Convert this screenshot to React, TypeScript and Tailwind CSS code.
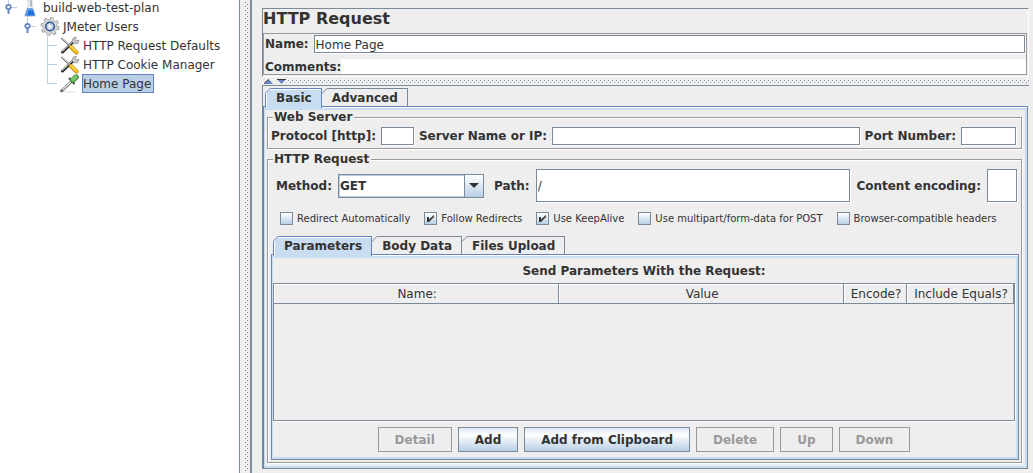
import React, { useState } from 'react';

type IconName = 'plan' | 'users' | 'config' | 'sampler';

interface TreeItem {
  id: string;
  label: string;
  level: number;
  icon: IconName;
}

const treeItems: TreeItem[] = [
  { id: 'plan', label: 'build-web-test-plan', level: 0, icon: 'plan' },
  { id: 'users', label: 'JMeter Users', level: 1, icon: 'users' },
  { id: 'defaults', label: 'HTTP Request Defaults', level: 2, icon: 'config' },
  { id: 'cookies', label: 'HTTP Cookie Manager', level: 2, icon: 'config' },
  { id: 'home', label: 'Home Page', level: 2, icon: 'sampler' }
];

const initialOptions = [
  { id: 'redirect', label: 'Redirect Automatically', checked: false },
  { id: 'follow', label: 'Follow Redirects', checked: true },
  { id: 'keepalive', label: 'Use KeepAlive', checked: true },
  { id: 'multipart', label: 'Use multipart/form-data for POST', checked: false },
  { id: 'browser', label: 'Browser-compatible headers', checked: false }
];

const actions = [
  { label: 'Detail', disabled: true },
  { label: 'Add', disabled: false },
  { label: 'Add from Clipboard', disabled: false },
  { label: 'Delete', disabled: true },
  { label: 'Up', disabled: true },
  { label: 'Down', disabled: true }
];

const inputClass =
  'min-w-0 border border-[#7a8a99] bg-white px-px font-normal shadow-[1px_1px_0_#fff] outline-none';

const groupClass =
  'min-w-0 border border-[#999] shadow-[1px_1px_0_#fff,inset_1px_1px_0_#fff]';

const panelClass =
  'flex flex-1 flex-col border border-[#7a8a99] border-l-[#6382bf] border-t-[#6382bf] shadow-[inset_0_1px_0_#fff,inset_1px_3px_0_#c8ddf2,inset_-2px_-2px_0_#c8ddf2]';

const bumpsClass =
  'bg-[conic-gradient(at_1px_1px,transparent_75%,#7a8a99_0),conic-gradient(at_1px_1px,transparent_75%,#7a8a99_0),conic-gradient(at_1px_1px,transparent_75%,#fff_0),conic-gradient(at_1px_1px,transparent_75%,#fff_0)] [background-size:4px_4px] [background-position:1px_1px,3px_3px,0_0,2px_2px]';

const TreeIcon: React.FC<{ name: IconName }> = ({ name }) => {
  switch (name) {
    case 'plan':
      return (
        <svg width="19" height="19" viewBox="0 0 19 19" className="shrink-0">
          <ellipse cx="9" cy="17.7" rx="6.500" ry="1.200" fill="#d5d5d5" />
          <path d="M7 2h4v5.500l2.800 9q.4 1.500-1 1.500H5.200q-1.400 0-1-1.500L7 7.500z" fill="#edf1f5" stroke="#c4ccd4" strokeWidth=".7" />
          <path d="M6.300 10.500h5.400l2.100 6q.2 1.300-.8 1.300H5q-1 0-.8-1.300z" fill="#2373d4" />
          <path d="M6.300 10.500h5.400l.7 2H5.600z" fill="#5d9fe6" />
          <path d="M6.500 13l-1 3.500" stroke="#a8d0fa" />
          <path d="M10 2.500v6" stroke="#7d8994" />
        </svg>
      );
    case 'users':
      return (
        <svg width="20" height="19" viewBox="0 0 20 19" className="shrink-0">
          <circle cx="10" cy="9.500" r="8" fill="none" stroke="#8c8c8c" strokeWidth="2.800" strokeDasharray="3.200 3.080" />
          <circle cx="10" cy="9.500" r="7.200" fill="#dadada" stroke="#999" strokeWidth=".8" />
          <circle cx="10" cy="9.500" r="7.700" fill="none" stroke="#dcdcdc" strokeWidth="2" strokeDasharray="2.200 3.850" strokeDashoffset="-.5" />
          <circle cx="10" cy="9.500" r="4.300" fill="#b9d2ed" stroke="#36578c" strokeWidth="1.600" />
          <path d="M8.500 7l4 2.500-4 2.500z" fill="#fff" />
        </svg>
      );
    case 'config':
      return (
        <svg width="20" height="19" viewBox="0 0 20 19" className="shrink-0">
          <path d="M2.500 16L13 6" stroke="#222" strokeWidth="3" strokeLinecap="round" />
          <path d="M2.500 15L13 5" stroke="#bbb" strokeWidth="1.500" strokeLinecap="round" />
          <path d="M16.500 1l-3.500 1.200-1 3.300 2.500 2.500 3.500-.8 1-3.200-3 1-1-1z" fill="#ccc" stroke="#888" strokeWidth=".7" />
          <path d="M1.500 2L10 10" stroke="#555" strokeWidth="1.700" />
          <path d="M1.500 1.500L10 9.500" stroke="#e5e5e5" />
          <path d="M11 11l5.500 5.500" stroke="#b57d0c" strokeWidth="4" strokeLinecap="round" />
          <path d="M11 10.800l5.500 5.500" stroke="#f9c21c" strokeWidth="3" strokeLinecap="round" />
          <path d="M11.500 10.500l4.500 4.500" stroke="#ffe884" strokeWidth=".9" />
        </svg>
      );
    default:
      return (
        <svg width="20" height="19" viewBox="0 0 20 19" className="shrink-0">
          <path d="M2 18h14" stroke="#e2e2e2" />
          <path d="M1.500 17L11.500 7.500" stroke="#666" strokeWidth="2.600" strokeLinecap="round" />
          <path d="M2.500 15.800L12 6.700" stroke="#eee" strokeWidth="1.300" />
          <path d="M9.500 4.500l4.500 5" stroke="#455045" strokeWidth="2" strokeLinecap="round" />
          <path d="M12.800 6L16 3.200" stroke="#3f8a40" strokeWidth="5.600" strokeLinecap="round" />
          <path d="M12.800 5.500L15.800 3" stroke="#79c86e" strokeWidth="3.600" strokeLinecap="round" />
        </svg>
      );
  }
};

const Handle: React.FC = () => (
  <svg width="14" height="19" viewBox="0 0 14 19" className="shrink-0">
    <path d="M6 9.500h6" stroke="#b8cfe5" />
    <path d="M3.500 0v6" stroke="#b8cfe5" />
    <path d="M3.500 11v5" stroke="#6382bf" strokeWidth="2" />
    <circle cx="3.500" cy="9" r="2.200" fill="#fff" stroke="#6382bf" strokeWidth="1.700" />
  </svg>
);

const Branch: React.FC<{ last: boolean }> = ({ last }) => (
  <svg width="13" height="19" viewBox="0 0 13 19" className="shrink-0">
    <path d={last ? 'M.5 0v9.500H10' : 'M.5 0v19M.5 9.500H10'} fill="none" stroke="#b8cfe5" />
  </svg>
);

const Tab: React.FC<{ label: string; selected: boolean; first: boolean; onClick: () => void }> = ({
  label,
  selected,
  first,
  onClick
}) => (
  <button
    role="tab"
    aria-selected={selected}
    onClick={onClick}
    className={`relative flex items-center border-t border-r pr-[9px] pl-[10px] leading-[18px] ${first ? 'border-l' : ''} ${
      selected
        ? '-mb-[2px] border-[#6382bf] bg-[#c8ddf2] pb-px shadow-[inset_1px_1px_0_#fff]'
        : 'border-[#7a8a99]'
    }`}
  >
    <svg
      width="6"
      height="6"
      viewBox="0 0 6 6"
      className={`absolute -top-px ${first ? '-left-px' : 'left-0'}`}
    >
      <path d="M0 0h6L0 6z" fill="#eee" />
      <path d="M0 5.500L5.500 0" stroke={selected ? '#6382bf' : '#7a8a99'} />
    </svg>
    {label}
  </button>
);

const App: React.FC = () => {
  const [selectedNode, setSelectedNode] = useState('home');
  const [tab, setTab] = useState('Basic');
  const [bodyTab, setBodyTab] = useState('Parameters');
  const [options, setOptions] = useState(initialOptions);

  const toggleOption = (id: string) => {
    setOptions(options.map(o => (o.id === id ? { ...o, checked: !o.checked } : o)));
  };

  return (
    <div className="flex min-h-screen bg-[#eee] font-['DejaVu_Sans',sans-serif] text-xs leading-[14px] text-[#333]">
      {/* Test plan tree */}
      <aside className="w-60 shrink-0 overflow-hidden border-r border-[#7a8a99] bg-white">
        <ul className="-mt-0.5">
          {treeItems.map((item, index) => (
            <li
              key={item.id}
              className={`flex h-[19px] items-center ${
                item.level === 0 ? 'pl-[5px]' : item.level === 1 ? 'pl-6' : 'pl-[47px]'
              }`}
            >
              {item.level < 2 ? <Handle /> : <Branch last={index === treeItems.length - 1} />}
              {item.level < 2 && <span className="w-0.5" />}
              <TreeIcon name={item.icon} />
              <button
                onClick={() => setSelectedNode(item.id)}
                className={`ml-0.5 h-[19px] border pr-0.5 whitespace-nowrap ${
                  selectedNode === item.id ? 'border-[#6382bf] bg-[#b8cfe5]' : 'border-transparent'
                }`}
              >
                {item.label}
              </button>
            </li>
          ))}
        </ul>
      </aside>
      <div className="flex w-3 shrink-0 border-r-2 border-[#7a8a99] py-px pr-0.5 pl-1">
        <div className={`flex-1 ${bumpsClass}`} />
      </div>

      <main className="flex min-w-0 flex-1 flex-col pt-2 pr-1 pb-1 pl-[10px] font-bold">
        {/* Name and comments */}
        <section className="border border-[#7a8a99] border-r-white border-b-white pr-px pb-px">
          <h1 className="h-6 text-base leading-[19px]">HTTP Request</h1>
          <div className="border border-[#999] pt-px pl-px">
            <div className="flex items-center gap-[5px] pr-px">
              <label htmlFor="name" className="leading-4">Name:</label>
              <input id="name" defaultValue="Home Page" className={`h-[18px] flex-1 pt-px ${inputClass}`} />
            </div>
            <div className="mt-[6px] flex items-center">
              <label htmlFor="comments">Comments:</label>
              <input id="comments" className="h-[15px] min-w-0 flex-1 bg-white font-normal outline-none" />
            </div>
          </div>
        </section>

        <div className="flex h-2 items-center pl-0.5">
          <button aria-label="Collapse top">
            <svg width="9" height="5" viewBox="0 0 9 5">
              <path d="M4.500 0L9 5H0z" fill="#6382bf" />
              <path d="M0 4.500L4.500 .5" stroke="#333" />
            </svg>
          </button>
          <button aria-label="Collapse bottom" className="ml-1">
            <svg width="9" height="5" viewBox="0 0 9 5">
              <path d="M0 0h9L4.500 5z" fill="#6382bf" />
              <path d="M0 .5h9" stroke="#333" />
            </svg>
          </button>
          <div className={`ml-px h-1 flex-1 ${bumpsClass}`} />
        </div>

        {/* Request settings */}
        <section className="flex flex-1 flex-col border-t border-l border-[#7a8a99] pt-0.5 pr-px">
          <div role="tablist" className="relative flex h-[18px] pl-0.5">
            {['Basic', 'Advanced'].map((label, index) => (
              <Tab key={label} label={label} first={index === 0} selected={tab === label} onClick={() => setTab(label)} />
            ))}
          </div>
          <div className={`pt-[3px] pr-[5px] pb-[5px] pl-[3px] ${panelClass}`}>
            <fieldset className={`flex items-center gap-[5px] pt-[3px] pr-0.5 pb-[3px] pl-[3px] ${groupClass}`}>
              <legend className="ml-0.5 bg-[#eee] pr-0.5 pl-px">Web Server</legend>
              <label htmlFor="protocol">Protocol [http]:</label>
              <input id="protocol" className={`h-[18px] w-[33px] ${inputClass}`} />
              <label htmlFor="server">Server Name or IP:</label>
              <input id="server" className={`h-[18px] flex-1 ${inputClass}`} />
              <label htmlFor="port">Port Number:</label>
              <input id="port" className={`mr-[3px] h-[18px] w-[55px] ${inputClass}`} />
            </fieldset>

            <fieldset className={`mt-[3px] flex flex-1 flex-col pt-[3px] pr-0.5 pb-0.5 pl-[3px] ${groupClass}`}>
              <legend className="ml-0.5 bg-[#eee] pr-0.5 pl-px">HTTP Request</legend>
              <div className="flex items-center gap-[6px] pr-0.5 pl-[5px]">
                <label htmlFor="method">Method:</label>
                <div className="relative mr-1">
                  <select
                    id="method"
                    className="block h-6 w-[146px] appearance-none border border-[#7a8a99] bg-white pl-px font-bold shadow-[inset_0_0_0_1px_#b8cfe5] outline-none"
                  >
                    <option>GET</option>
                    <option>POST</option>
                    <option>PUT</option>
                    <option>DELETE</option>
                  </select>
                  <span className="pointer-events-none absolute inset-y-0 right-0 flex w-5 items-center justify-center border border-[#7a8a99] bg-linear-to-b from-white to-[#b8cfe5]">
                    <svg width="10" height="5" viewBox="0 0 10 5">
                      <path d="M0 0h10L5 5z" fill="#333" />
                    </svg>
                  </span>
                </div>
                <label htmlFor="path">Path:</label>
                <input id="path" defaultValue="/" className={`h-[33px] flex-1 ${inputClass}`} />
                <label htmlFor="encoding">Content encoding:</label>
                <input id="encoding" className={`h-[33px] w-[30px] ${inputClass}`} />
              </div>

              <div className="mt-[10px] flex h-[13px] items-center gap-[14px] pl-[9px] text-[10px] font-normal whitespace-nowrap">
                {options.map(option => (
                  <label key={option.id} className="flex items-center gap-1">
                    <span className="relative size-[13px]">
                      <input
                        type="checkbox"
                        checked={option.checked}
                        onChange={() => toggleOption(option.id)}
                        className="block size-[13px] appearance-none border border-[#7a8a99] bg-linear-to-b from-white to-[#b8cfe5]"
                      />
                      {option.checked && (
                        <svg width="13" height="13" viewBox="0 0 13 13" className="pointer-events-none absolute inset-0">
                          <path d="M3 5h2v2.500L10 3v2L5 10H3z" fill="#333" />
                        </svg>
                      )}
                    </span>
                    {option.label}
                  </label>
                ))}
              </div>

              <div role="tablist" className="relative mt-[11px] flex h-[18px] pl-0.5">
                {['Parameters', 'Body Data', 'Files Upload'].map((label, index) => (
                  <Tab
                    key={label}
                    label={label}
                    first={index === 0}
                    selected={bodyTab === label}
                    onClick={() => setBodyTab(label)}
                  />
                ))}
              </div>
              <div className={`pt-[9px] pr-[3px] pb-[7px] pl-px ${panelClass}`}>
                <h2 className="text-center">Send Parameters With the Request:</h2>
                <div className="mt-[5px] min-h-[138px] flex-1 border border-[#7a8a99] shadow-[1px_1px_0_#fff]">
                  <table className="w-full table-fixed border-collapse">
                    <thead>
                      <tr className="h-[19px] *:border-r *:border-b *:border-[#7a8a99] *:p-0 *:pt-px *:pl-0.5 *:font-normal *:shadow-[inset_1px_1px_0_#fff]">
                        <th>Name:</th>
                        <th>Value</th>
                        <th className="w-[63px]">Encode?</th>
                        <th className="w-[107px]">Include Equals?</th>
                      </tr>
                    </thead>
                    <tbody />
                  </table>
                </div>
                <div className="mt-[6px] flex justify-center gap-[6px]">
                  {actions.map(action => (
                    <button
                      key={action.label}
                      disabled={action.disabled}
                      className={`h-[25px] border px-4 ${
                        action.disabled
                          ? 'border-[#999] text-[#999]'
                          : 'border-[#7a8a99] bg-linear-to-b from-[#dde8f3] via-white via-30% to-[#b8cfe5]'
                      }`}
                    >
                      {action.label}
                    </button>
                  ))}
                </div>
              </div>
            </fieldset>
          </div>
        </section>
      </main>
    </div>
  );
};

export default App;
